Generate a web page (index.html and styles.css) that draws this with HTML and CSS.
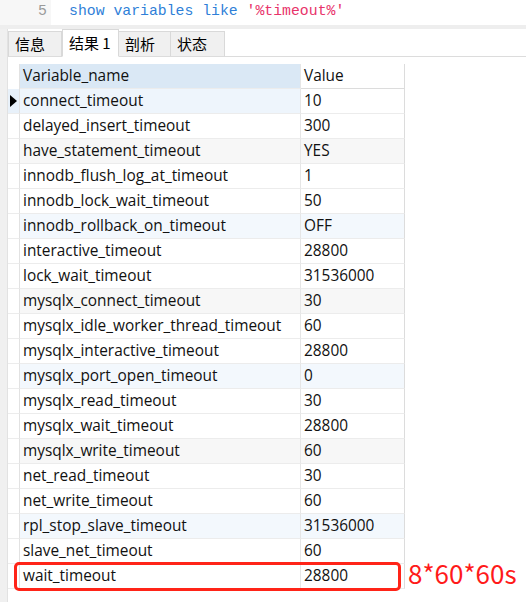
FILE: index.html
```html
<!DOCTYPE html>
<html>
<head>
<meta charset="utf-8">
<link rel="stylesheet" href="styles.css">
</head>
<body>
<div class="editor">
  <div class="lineno">5</div>
  <div class="code"><span class="kw">show variables like </span><span class="str">'%timeout%'</span></div>
</div>
<div class="strip"></div>
<div class="main">
  <div class="side"></div>
  <div class="content">
    <div class="tabs">
      <div class="tab">信息</div>
      <div class="tab active">结果 1</div>
      <div class="tab">剖析</div>
      <div class="tab">状态</div>
      <div class="tabfill"></div>
    </div>
    <div class="grid">
      <div class="row head"><div class="ind"></div><div class="c1">Variable_name</div><div class="c2">Value</div></div>
      <div class="row sel"><div class="ind"><span class="tri"></span></div><div class="c1">connect_timeout</div><div class="c2">10</div></div>
      <div class="row"><div class="ind"></div><div class="c1">delayed_insert_timeout</div><div class="c2">300</div></div>
      <div class="row gray"><div class="ind"></div><div class="c1">have_statement_timeout</div><div class="c2">YES</div></div>
      <div class="row"><div class="ind"></div><div class="c1">innodb_flush_log_at_timeout</div><div class="c2">1</div></div>
      <div class="row"><div class="ind"></div><div class="c1">innodb_lock_wait_timeout</div><div class="c2">50</div></div>
      <div class="row blue"><div class="ind"></div><div class="c1">innodb_rollback_on_timeout</div><div class="c2">OFF</div></div>
      <div class="row"><div class="ind"></div><div class="c1">interactive_timeout</div><div class="c2">28800</div></div>
      <div class="row"><div class="ind"></div><div class="c1">lock_wait_timeout</div><div class="c2">31536000</div></div>
      <div class="row gray"><div class="ind"></div><div class="c1">mysqlx_connect_timeout</div><div class="c2">30</div></div>
      <div class="row"><div class="ind"></div><div class="c1">mysqlx_idle_worker_thread_timeout</div><div class="c2">60</div></div>
      <div class="row"><div class="ind"></div><div class="c1">mysqlx_interactive_timeout</div><div class="c2">28800</div></div>
      <div class="row blue"><div class="ind"></div><div class="c1">mysqlx_port_open_timeout</div><div class="c2">0</div></div>
      <div class="row"><div class="ind"></div><div class="c1">mysqlx_read_timeout</div><div class="c2">30</div></div>
      <div class="row"><div class="ind"></div><div class="c1">mysqlx_wait_timeout</div><div class="c2">28800</div></div>
      <div class="row gray"><div class="ind"></div><div class="c1">mysqlx_write_timeout</div><div class="c2">60</div></div>
      <div class="row"><div class="ind"></div><div class="c1">net_read_timeout</div><div class="c2">30</div></div>
      <div class="row"><div class="ind"></div><div class="c1">net_write_timeout</div><div class="c2">60</div></div>
      <div class="row blue"><div class="ind"></div><div class="c1">rpl_stop_slave_timeout</div><div class="c2">31536000</div></div>
      <div class="row"><div class="ind"></div><div class="c1">slave_net_timeout</div><div class="c2">60</div></div>
      <div class="row"><div class="ind"></div><div class="c1">wait_timeout</div><div class="c2">28800</div></div>
    </div>
  </div>
</div>
<div class="redbox"></div>
<div class="note">8*60*60s</div>
</body>
</html>
```
FILE: styles.css
```css
html, body {
  margin: 0;
  padding: 0;
  background: #ffffff;
  width: 526px;
  height: 602px;
  overflow: hidden;
  position: relative;
}
.editor {
  display: flex;
  height: 25px;
  align-items: stretch;
}
.lineno {
  width: 51px;
  box-sizing: border-box;
  background: #f7f7f7;
  color: #9a9a9a;
  font-family: "Liberation Mono", monospace;
  font-size: 14.8px;
  text-align: right;
  padding-right: 4px;
  line-height: 22px;
}
.code {
  padding-left: 18px;
  font-family: "Liberation Mono", monospace;
  font-size: 14.8px;
  line-height: 22px;
}
.kw { color: #2f7fd8; }
.str { color: #e8336a; }
.strip {
  height: 4px;
  background: #eeeeee;
}
.main {
  display: flex;
}
.side {
  width: 7px;
  background: #f0f0f0;
  border-right: 1px solid #e2e2e2;
  height: 573px;
}
.content {
  flex: 1;
}
.tabs {
  display: flex;
  align-items: flex-end;
  height: 28px;
  font-family: "Noto Sans CJK SC", sans-serif;
  font-size: 15px;
  color: #000;
}
.tab {
  box-sizing: border-box;
  height: 26px;
  width: 54px;
  background: #f0f0f0;
  border: 1px solid #d9d9d9;
  border-left: none;
  border-bottom: 1px solid #dcdcdc;
  padding-left: 6px;
  line-height: 24px;
}
.tab:first-child {
  border-left: 1px solid #d9d9d9;
}
.tab.active {
  height: 28px;
  width: 57px;
  background: #ffffff;
  border-bottom: 1px solid #ffffff;
  border-left: 1px solid #d9d9d9;
  padding-left: 6px;
  line-height: 26px;
}
.tab.active + .tab { width: 52px; }
.tabfill {
  flex: 1;
  height: 1px;
  background: #dcdcdc;
}
.grid {
  margin-top: 7px;
  font-family: "Open Sans", sans-serif;
  font-size: 15.4px;
  color: #111;
}
.row {
  display: grid;
  grid-template-columns: 12px 281px 104px;
  height: 25px;
}
.row > div {
  box-sizing: border-box;
  border-right: 1px solid #e6e6e6;
  border-bottom: 1px solid #ececec;
  line-height: 23px;
  white-space: nowrap;
  overflow: hidden;
}
.row > .ind { border-right: 1px solid #e2e2e2; border-bottom: 1px solid #ececec; }
.c1 { padding-left: 3px; }
.c2 { padding-left: 3px; border-right: 1px solid #dcdcdc !important; }
.head .c1 { background: #dae8f5; }
.head .ind { border-bottom: none; }
.head .c2 { background: #ffffff; border-bottom: 1px solid #dcdcdc; }
.sel .ind { background: #e8f1fa; position: relative; }
.sel .c1 { background: #eef5fc; }
.gray .c1, .gray .c2 { background: #f7f7f7; }
.blue .c1, .blue .c2 { background: #f3f8fd; }
.tri {
  position: absolute;
  left: 2px;
  top: 6px;
  width: 0;
  height: 0;
  border-top: 6px solid transparent;
  border-bottom: 6px solid transparent;
  border-left: 7px solid #000;
}
.redbox {
  position: absolute;
  left: 14px;
  top: 562px;
  width: 387px;
  height: 29px;
  box-sizing: border-box;
  border: 3px solid #ff2418;
  border-radius: 5px;
}
.note {
  position: absolute;
  left: 408px;
  top: 555px;
  font-family: "Noto Sans CJK SC", "Noto Sans", sans-serif;
  font-size: 26px;
  line-height: 36px;
  color: #ff1a1a;
}
```
